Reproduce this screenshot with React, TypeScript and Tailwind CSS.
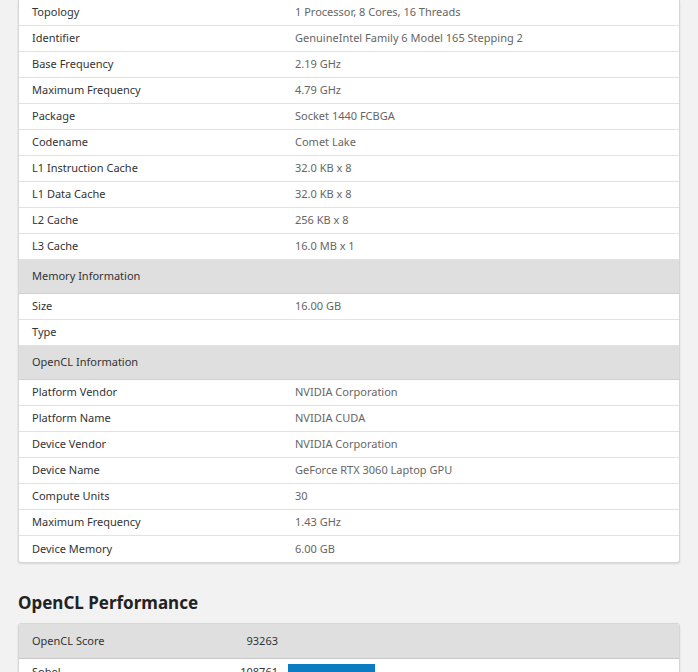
const cpu: [string, string][] = [
  ['Topology', '1 Processor, 8 Cores, 16 Threads'],
  ['Identifier', 'GenuineIntel Family 6 Model 165 Stepping 2'],
  ['Base Frequency', '2.19 GHz'],
  ['Maximum Frequency', '4.79 GHz'],
  ['Package', 'Socket 1440 FCBGA'],
  ['Codename', 'Comet Lake'],
  ['L1 Instruction Cache', '32.0 KB x 8'],
  ['L1 Data Cache', '32.0 KB x 8'],
  ['L2 Cache', '256 KB x 8'],
  ['L3 Cache', '16.0 MB x 1'],
];
const mem: [string, string][] = [
  ['Size', '16.00 GB'],
  ['Type', ''],
];
const ocl: [string, string][] = [
  ['Platform Vendor', 'NVIDIA Corporation'],
  ['Platform Name', 'NVIDIA CUDA'],
  ['Device Vendor', 'NVIDIA Corporation'],
  ['Device Name', 'GeForce RTX 3060 Laptop GPU'],
  ['Compute Units', '30'],
  ['Maximum Frequency', '1.43 GHz'],
  ['Device Memory', '6.00 GB'],
];

function Row({ label, value }: { label: string; value: string }) {
  return (
    <div className="flex h-[26px] items-center border-b border-[#e2e2e2] last:border-b-0">
      <div className="w-[276px] pl-[13px] text-[#333]">{label}</div>
      <div className="text-[#666]">{value}</div>
    </div>
  );
}

function Header({ title }: { title: string }) {
  return (
    <div className="flex h-[34px] items-center bg-[#dfdfe0] pl-[13px] text-[#333] border-b border-[#d0d0d0]">
      {title}
    </div>
  );
}

export default function App() {
  return (
    <div className="min-h-[672px] bg-[#f2f2f2] px-[18px] text-[11px] font-['Liberation_Sans']">
      <div className="overflow-hidden rounded-b-[3px] border border-t-0 border-[#d6d6d6] bg-white shadow-[0_1px_2px_rgba(0,0,0,0.12)]">
        {cpu.map(([l, v]) => <Row key={l} label={l} value={v} />)}
        <Header title="Memory Information" />
        {mem.map(([l, v]) => <Row key={l} label={l} value={v} />)}
        <Header title="OpenCL Information" />
        {ocl.map(([l, v]) => <Row key={l} label={l} value={v} />)}
      </div>
      <h2 className="mt-[30px] mb-[10px] text-[17px] leading-[20px] font-bold text-[#222]">OpenCL Performance</h2>
      <div className="overflow-hidden rounded-t-[3px] border border-[#d6d6d6] bg-white shadow-[0_1px_2px_rgba(0,0,0,0.12)]">
        <div className="flex h-[35px] items-center bg-[#dfdfe0] border-b border-[#c8c8c8] text-[#333]">
          <div className="w-[176px] pl-[13px]">OpenCL Score</div>
          <div className="w-[83px] text-right">93263</div>
        </div>
        <div className="flex h-[26px] items-center text-[#333]">
          <div className="w-[176px] pl-[13px]">Sobel</div>
          <div className="w-[83px] text-right">108761</div>
          <div className="ml-[10px] h-[16px] w-[87px] bg-[#0b7cc1]" />
        </div>
      </div>
    </div>
  );
}
